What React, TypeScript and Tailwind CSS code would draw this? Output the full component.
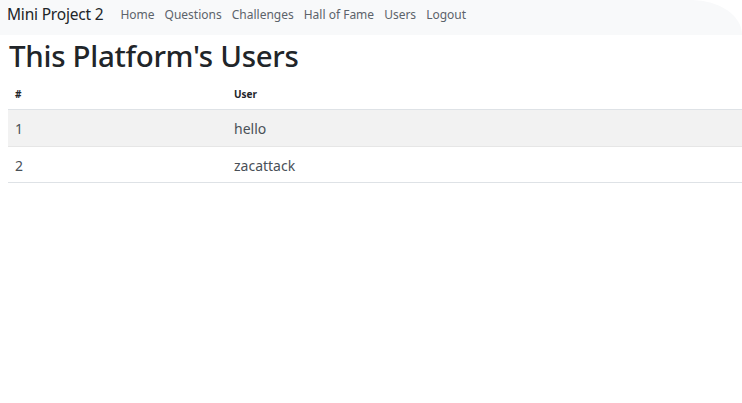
import React from "react";

export default function App() {
  const font = { fontFamily: '"Noto Sans", "Open Sans", sans-serif' };
  return (
    <div className="w-[742px] h-[403px] bg-white overflow-hidden" style={font}>
      <nav className="h-[35px] bg-[#f8f9fa] rounded-tr-[50px_35px] flex items-center pl-[7px] pb-[5px]">
        <span className="text-[15.5px] text-[#212529] mr-[17px] tracking-[-0.2px]">Mini Project 2</span>
        <div className="flex gap-[10px] text-[12px] text-[#5c636a]">
          <span>Home</span>
          <span>Questions</span>
          <span>Challenges</span>
          <span>Hall of Fame</span>
          <span>Users</span>
          <span>Logout</span>
        </div>
      </nav>
      <div className="pl-[8px]">
        <h1 className="text-[29.5px] leading-[40px] font-medium text-[#212529] pl-[1px] mt-[1px] tracking-[-0.3px]">This Platform's Users</h1>
        <table className="w-[740px] border-collapse text-[#212529] mt-[5px]">
          <thead>
            <tr className="border-b border-[#dee2e6] h-[28px]">
              <th className="w-[219px] text-left pl-[7px] text-[10px] font-bold">#</th>
              <th className="text-left pl-[7px] text-[10px] font-bold">User</th>
            </tr>
          </thead>
          <tbody className="text-[14px] text-[#495057]">
            <tr className="bg-[#f2f2f2] border-b border-[#e6e6e6] h-[37px]">
              <td className="pl-[7px] pt-[2px]">1</td>
              <td className="pl-[7px] pt-[2px]">hello</td>
            </tr>
            <tr className="border-b border-[#dee2e6] h-[36px]">
              <td className="pl-[7px] pt-[2px]">2</td>
              <td className="pl-[7px] pt-[2px]">zacattack</td>
            </tr>
          </tbody>
        </table>
      </div>
    </div>
  );
}
